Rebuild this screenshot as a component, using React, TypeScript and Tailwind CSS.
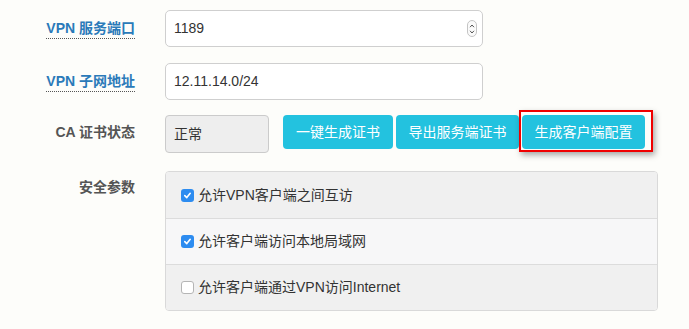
const font = { fontFamily: '"Liberation Sans", "Noto Sans CJK SC", sans-serif' };

const Label = ({ text, link }: { text: string; link?: boolean }) => (
  <div className="w-[135px] shrink-0 flex justify-end">
    {link ? (
      <span className="text-[14px] font-bold text-[#2a7ab9] border-b border-dotted border-[#555] leading-[18px] pb-[1px]">
        {text}
      </span>
    ) : (
      <span className="text-[14px] font-bold text-[#555] leading-[18px]">{text}</span>
    )}
  </div>
);

const Check = ({ checked }: { checked: boolean }) =>
  checked ? (
    <span className="w-[13px] h-[13px] rounded-[3px] bg-[#2d8cf0] flex items-center justify-center">
      <svg width="9" height="9" viewBox="0 0 10 10">
        <path d="M2 5.2 L4.2 7.3 L8 2.6" fill="none" stroke="#fff" strokeWidth="1.8" strokeLinecap="round" strokeLinejoin="round" />
      </svg>
    </span>
  ) : (
    <span className="w-[13px] h-[13px] rounded-[3px] bg-white border border-[#b5b5b5]" />
  );

const options = [
  { text: "允许VPN客户端之间互访", checked: true, bg: "bg-[#f0f0f0]" },
  { text: "允许客户端访问本地局域网", checked: true, bg: "bg-[#f7f7f8]" },
  { text: "允许客户端通过VPN访问Internet", checked: false, bg: "bg-[#f0f0f0]" },
];

export default function App() {
  return (
    <div className="w-[689px] h-[329px] bg-[#fdfdfa] pt-[10px] overflow-hidden" style={font}>
      {/* port */}
      <div className="flex items-center gap-[30px]">
        <Label text="VPN 服务端口" link />
        <div className="w-[318px] h-[37px] bg-white border border-[#cfcfcf] rounded-[5px] flex items-center pl-[8px] pr-[5px] justify-between">
          <span className="text-[14px] text-[#333]">1189</span>
          <span className="w-[10px] h-[17px] rounded-full border border-[#c4c4c4] bg-[#fafafa] flex flex-col items-center justify-center gap-[2px]">
            <svg width="6" height="4" viewBox="0 0 6 4"><path d="M1 3.2 L3 1 L5 3.2" fill="none" stroke="#555" strokeWidth="1" /></svg>
            <svg width="6" height="4" viewBox="0 0 6 4"><path d="M1 0.8 L3 3 L5 0.8" fill="none" stroke="#555" strokeWidth="1" /></svg>
          </span>
        </div>
      </div>

      {/* subnet */}
      <div className="flex items-center gap-[30px] mt-[16px]">
        <Label text="VPN 子网地址" link />
        <div className="w-[318px] h-[37px] bg-white border border-[#cfcfcf] rounded-[5px] flex items-center pl-[8px]">
          <span className="text-[14px] text-[#333]">12.11.14.0/24</span>
        </div>
      </div>

      {/* ca status */}
      <div className="flex items-start gap-[30px] mt-[15px]">
        <div className="h-[34px] flex items-center">
          <Label text="CA 证书状态" />
        </div>
        <div className="flex items-start">
          <div className="w-[104px] h-[38px] bg-[#eeeeee] border border-[#cbcbcb] rounded-[4px] flex items-center pl-[8px] text-[14px] text-[#333]">
            正常
          </div>
          <div className="flex gap-[3px] ml-[14px]">
            <button className="w-[110px] h-[34px] rounded-[4px] bg-[#23c2df] text-white text-[14px]">一键生成证书</button>
            <button className="w-[123px] h-[34px] rounded-[4px] bg-[#23c2df] text-white text-[14px]">导出服务端证书</button>
            <div className="relative">
              <button className="w-[123px] h-[34px] rounded-[4px] bg-[#23c2df] text-white text-[14px]">生成客户端配置</button>
              <div className="absolute left-[-3px] top-[-5px] w-[134px] h-[42px] border-2 border-[#f00000] shadow-[2px_3px_6px_rgba(0,0,0,0.35)]" />
            </div>
          </div>
        </div>
      </div>

      {/* options */}
      <div className="flex items-start gap-[30px] mt-[18px]">
        <div className="h-[32px] flex items-center">
          <Label text="安全参数" />
        </div>
        <div className="w-[493px] border border-[#d9d9d9] rounded-[4px] overflow-hidden">
          {options.map((o, i) => (
            <div
              key={o.text}
              className={`${o.bg} h-[46px] flex items-center gap-[4px] pl-[15px] ${i > 0 ? "border-t border-[#dcdcdc]" : ""}`}
            >
              <Check checked={o.checked} />
              <span className="text-[14px] text-[#333]">{o.text}</span>
            </div>
          ))}
        </div>
      </div>
    </div>
  );
}
